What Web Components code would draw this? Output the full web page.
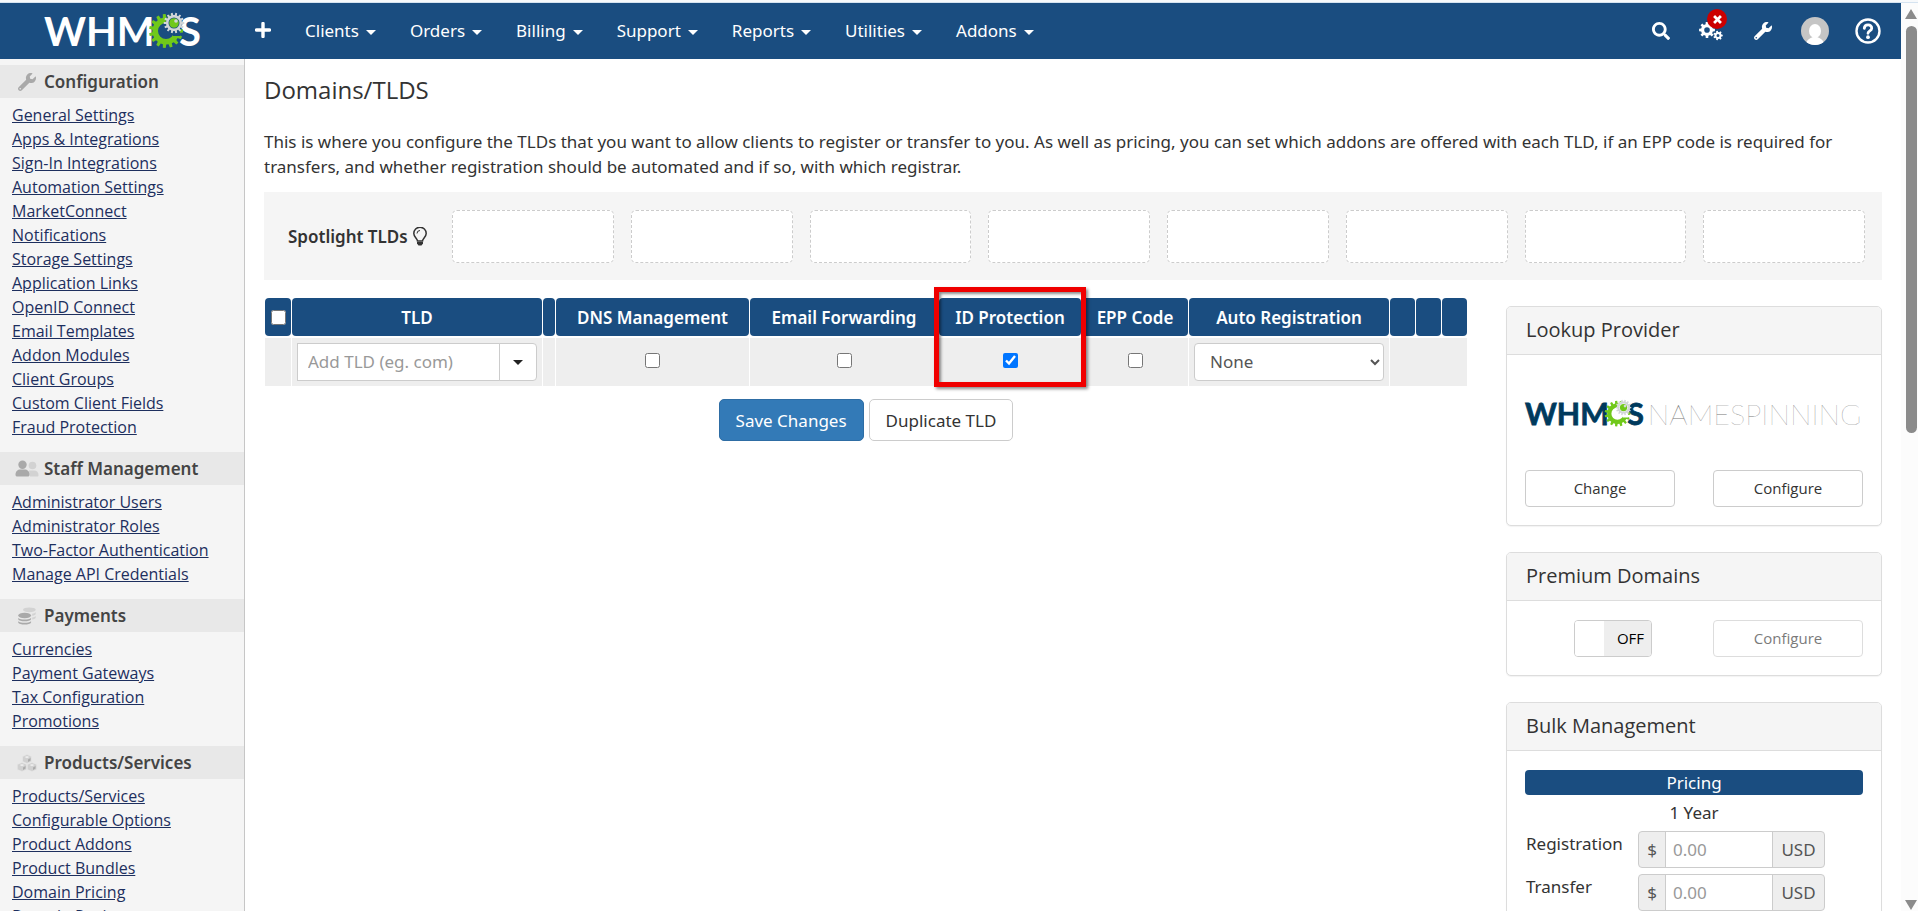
<!DOCTYPE html>
<html lang="en">
<head>
<meta charset="utf-8">
<meta name="viewport" content="width=device-width, initial-scale=1">
<title>WHMCS - Domains/TLDS</title>
<style>
  :root {
    --navy: #1a4d80;
    --line: #ccc;
    --ink: #333;
    --body-font: "Noto Sans", "Open Sans", sans-serif;
    --ui-font: "Open Sans", "Noto Sans", sans-serif;
  }
  body { margin: 0; background: #fff; color: var(--ink); font: 17px/25px var(--body-font); overflow: hidden; }
</style>
</head>
<body>
<admin-app>
  <top-bar slot="header"></top-bar>
  <side-nav slot="nav">
    <side-section icon="wrench" heading="Configuration"
      items="General Settings|Apps &amp; Integrations|Sign-In Integrations|Automation Settings|MarketConnect|Notifications|Storage Settings|Application Links|OpenID Connect|Email Templates|Addon Modules|Client Groups|Custom Client Fields|Fraud Protection"></side-section>
    <side-section icon="users" heading="Staff Management"
      items="Administrator Users|Administrator Roles|Two-Factor Authentication|Manage API Credentials"></side-section>
    <side-section icon="coins" heading="Payments"
      items="Currencies|Payment Gateways|Tax Configuration|Promotions"></side-section>
    <side-section icon="cubes" heading="Products/Services"
      items="Products/Services|Configurable Options|Product Addons|Product Bundles|Domain Pricing|Domain Registrars"></side-section>
  </side-nav>
  <domain-page>
    <spotlight-bar slot="spotlight" slots="8"></spotlight-bar>
    <tld-table slot="table"></tld-table>
    <side-panel slot="aside" heading="Lookup Provider">
      <lookup-provider></lookup-provider>
    </side-panel>
    <side-panel slot="aside" heading="Premium Domains">
      <premium-domains></premium-domains>
    </side-panel>
    <side-panel slot="aside" heading="Bulk Management">
      <bulk-pricing></bulk-pricing>
    </side-panel>
  </domain-page>
  <scroll-rail slot="rail"></scroll-rail>
</admin-app>

<script>
/* Outline of a cog with square teeth, centred on (cx, cy). */
function cog(cx, cy, outer, inner, teeth) {
  const pts = [];
  const step = Math.PI * 2 / teeth;
  for (let i = 0; i < teeth; i++) {
    const a = i * step;
    for (const [r, k] of [[inner, -0.3], [outer, -0.2], [outer, 0.2], [inner, 0.3]]) {
      pts.push((cx + r * Math.cos(a + k * step)).toFixed(2) + ' ' + (cy + r * Math.sin(a + k * step)).toFixed(2));
    }
  }
  return 'M' + pts.join('L') + 'Z';
}
function hole(cx, cy, r) {
  return `M${cx - r} ${cy}a${r} ${r} 0 1 0 ${2 * r} 0a${r} ${r} 0 1 0 ${-2 * r} 0Z`;
}

const WRENCH = 'M507.73 109.1c-2.24-9.03-13.54-12.09-20.12-5.51l-74.36 74.36-67.88-11.31-11.31-67.88 74.36-74.36c6.62-6.62 3.43-17.9-5.66-20.16-47.38-11.74-99.55.91-136.58 37.93-39.64 39.64-50.55 97.1-34.05 147.2L18.74 402.76c-24.99 24.99-24.99 65.51 0 90.5 24.99 24.99 65.51 24.99 90.5 0l213.21-213.21c50.12 16.71 107.47 5.68 147.37-34.22 37.07-37.07 49.7-89.32 37.91-136.73zM64 472c-13.25 0-24-10.75-24-24 0-13.26 10.75-24 24-24s24 10.74 24 24c0 13.25-10.75 24-24 24z';

const ICONS = {
  plus: ['0 0 16 16', '<path d="M8 1.500v13M1.500 8h13" stroke="currentColor" stroke-width="3.400" stroke-linecap="round"/>'],
  search: ['0 0 512 512', '<path d="M505 442.700L405.300 343c-4.500-4.500-10.600-7-17-7H372c27.600-35.300 44-79.700 44-128C416 93.100 322.900 0 208 0S0 93.100 0 208s93.100 208 208 208c48.300 0 92.700-16.400 128-44v16.300c0 6.400 2.500 12.500 7 17l99.700 99.700c9.400 9.400 24.600 9.400 33.900 0l28.300-28.300c9.400-9.400 9.400-24.600.1-34zM208 336c-70.700 0-128-57.200-128-128 0-70.700 57.200-128 128-128 70.700 0 128 57.200 128 128 0 70.700-57.200 128-128 128z" fill="currentColor"/>'],
  wrench: ['0 0 512 512', `<path d="${WRENCH}" fill="currentColor"/>`],
  cogs: ['0 0 24 20', `<path fill="currentColor" fill-rule="evenodd" d="${cog(8, 9, 8, 6, 8)}${hole(8, 9, 2.8)}${cog(19, 14.5, 4.8, 3.6, 7)}${hole(19, 14.5, 1.5)}"/>`],
  avatar: ['0 0 28 28', '<clipPath id="c"><circle cx="14" cy="14" r="14"/></clipPath><g clip-path="url(#c)"><path fill="#c5c5c5" d="M0 0h28v28H0z"/><ellipse cx="14" cy="14" rx="6" ry="7" fill="#fff"/><path fill="#fff" d="M5 28c0-5 4-7 7-8h4c3 1 7 3 7 8z"/></g>'],
  help: ['0 0 26 26', '<circle cx="13" cy="13" r="11.500" fill="none" stroke="currentColor" stroke-width="2.400"/><path d="M9.300 10.400C9.500 5.700 17 6 16.700 10.300c-.2 2.700-3.700 2.500-3.700 5" fill="none" stroke="currentColor" stroke-width="2.800" stroke-linecap="round"/><circle cx="13" cy="19.200" r="1.900" fill="currentColor"/>'],
  bulb: ['0 0 14 19', '<path d="M4.500 14c0-2.500-3.700-4-3.700-7.600a6.200 6.200 0 0 1 12.400 0C13.200 10 9.500 11.500 9.500 14z" fill="none" stroke="currentColor" stroke-width="1.500"/><path d="M4 6.500a3 3 0 0 1 3-3" fill="none" stroke="currentColor"/><path d="M4 15h6v1.500L8.500 18.500h-3L4 16.500z" fill="currentColor"/>'],
  users: ['0 0 24 17', '<g fill="#d2d2d2"><circle cx="17.500" cy="5" r="3.800"/><path d="M14 10h5c3 0 4.500 2 4.500 4.500 0 1-.4 1.500-1.500 1.500h-7z"/></g><g fill="#a9a9a9"><circle cx="7.500" cy="4.200" r="4.200"/><path d="M.5 14c0-3 2-5 5-5h4c3 0 5 2 5 5 0 1.500-.5 2-2 2h-10c-1.500 0-2-.5-2-2z"/></g>'],
  coins: ['0 0 20 19', '<g fill="#d2d2d2"><ellipse cx="12.500" cy="3" rx="6.700" ry="2.600"/><path d="M15.500 7c1.700-.2 3-.7 3.700-1.500V7c0 1-1.500 1.800-3.700 2.200zM15.500 11c1.700-.2 3-.7 3.700-1.500V11c0 1-1.500 1.800-3.700 2.200z"/></g><g fill="#a9a9a9"><ellipse cx="7.500" cy="9" rx="6.800" ry="3"/><path d="M.7 11.500c2.500 2.200 11 2.200 13.600 0v1.300c-1 3-12.600 3-13.600 0zM.7 15c2.500 2.200 11 2.200 13.600 0v1.300c-1 3-12.600 3-13.600 0z"/></g>'],
  cubes: ['0 0 20 18', '<g fill="#d0d0d0" stroke="#e8e8e8" stroke-width=".6"><path d="M10 .5l4.500 2v5L10 9.500l-4.500-2v-5z"/><path d="M5 8.500l4.700 2v5L5 17.500l-4.700-2v-5z"/><path d="M15 8.500l4.700 2v5L15 17.500l-4.700-2v-5z"/></g><g fill="#acacac"><path d="M11 5.500l2.500-1.500v2.500L11 8zM6 13.500L8.500 12v2.500L6 16zM16 13.500l2.500-1.500v2.500L16 16z"/></g><g fill="#ececec"><path d="M10 2l2.500 1-2.500 1.200L7.500 3zM5 10l2.500 1L5 12.200 2.500 11zM15 10l2.500 1-2.500 1.200-2.500-1.200z"/></g>']
};

class Base extends HTMLElement {
  connectedCallback() {
    if (this.shadowRoot) return;
    this.attachShadow({ mode: 'open' }).innerHTML = this.render();
  }
}
const define = (name, render) => customElements.define(name, class extends Base {
  render() { return render(this); }
});

define('ui-icon', el => {
  const [box, art] = ICONS[el.getAttribute('name')];
  return `<style>:host{display:block;flex:none}svg{display:block;width:100%;height:100%}</style>
  <svg viewBox="${box}" aria-hidden="true">${art}</svg>`;
});

/* WHMCS word mark: --mark colours the letters, --under is the surface below. */
define('brand-logo', el => {
  const tail = el.hasAttribute('product');
  return `<style>
    :host{display:block}
    svg{display:block;width:100%;height:auto;overflow:visible}
    text{font-family:Lato,sans-serif}
    .w{font-size:40px;font-weight:700;fill:var(--mark)}
    .bold{stroke:var(--mark);stroke-width:1}
    .p{font-size:38px;font-weight:100;fill:#777}
  </style>
  <svg viewBox="0 0 ${tail ? 446 : 158} 36" role="img">
    <text class="w${tail ? ' bold' : ''}" x="0" y="33">WHM</text>
    <text class="w${tail ? ' bold' : ''}" x="135" y="33">S</text>
    <path fill="#70c81a" fill-rule="evenodd" d="${cog(122, 18, 17, 13.6, 15)}${hole(122, 18, 8)}"/>
    <path fill="var(--under)" d="M125 15l11-4v12h-7z"/>
    <circle cx="130" cy="10" r="8.500" fill="var(--under)"/>
    <path fill="#d2d6d8" fill-rule="evenodd" d="${cog(130, 10, 10.3, 8, 14)}${hole(130, 10, 5.5)}"/>
    <circle cx="130" cy="10" r="4.800" fill="#70c81a"/>
    <circle cx="132" cy="8" r="1.800" fill="#d2d6d8"/>
    ${tail ? '<text class="p" x="162" y="33">NAMESPINNING</text>' : ''}
  </svg>`;
});

define('admin-app', () => `<style>
    :host{display:grid;grid-template:auto auto minmax(0,1fr) / auto minmax(0,1fr) 17px;height:100vh}
    .strip{grid-column:1/-1;height:2px;background:#f7f9fb;border-bottom:1px solid #d5e3f0}
    ::slotted([slot=header]){grid-column:1/3;grid-row:2}
    ::slotted([slot=nav]){grid-column:1;grid-row:3;overflow:hidden}
    ::slotted([slot=rail]){grid-column:3;grid-row:2/4}
    main{grid-column:2;grid-row:3;overflow:hidden}
  </style>
  <div class="strip"></div><slot name="header"></slot><slot name="nav"></slot>
  <main><slot></slot></main><slot name="rail"></slot>`);

define('scroll-rail', () => `<style>
    :host{display:flex;flex-direction:column;align-items:center;background:#fcfcfc;padding:6px 0 1px 3px}
    .up,.down{border:6px solid transparent;border-top:0;border-bottom:10px solid #8b8b8b}
    .down{border-top:10px solid #8b8b8b;border-bottom:0}
    .track{flex:1;width:11px;margin:7px 0}
    .thumb{height:47%;background:#8b8b8b;border-radius:6px}
  </style><div class="up"></div><div class="track"><div class="thumb"></div></div><div class="down"></div>`);

define('top-bar', () => `<style>
    :host{display:flex;align-items:center;height:56px;background:var(--navy);color:#fff}
    brand-logo{width:158px;margin-left:44px;--mark:#fff;--under:var(--navy)}
    nav{display:flex;align-items:center;margin-left:53px;gap:34px;padding-bottom:2px}
    .tools{display:flex;align-items:center;margin-left:auto;margin-right:20px}
    button{all:unset;cursor:pointer;display:block;position:relative}
    a{color:inherit;text-decoration:none;display:flex;align-items:center;gap:7px}
    a::after{content:"";border:5px solid transparent;border-top-color:#fff;border-bottom:0;margin-top:5px}
    .s16{width:16px;height:16px}.s18{width:18px;height:18px}
    .gears{width:24px;height:20px}.s28{width:28px;height:28px}.s26{width:26px;height:26px}
    .badge{position:absolute;left:8px;top:-12px;width:20px;height:20px;border-radius:50%;background:#c00;display:grid;place-items:center}
    .badge svg{width:11px;height:11px}
    .search{margin-right:29px}.system{margin-right:31px}.config{margin-right:29px}.account{margin-right:26px}
  </style>
  <brand-logo></brand-logo>
  <nav>
    <button aria-label="Add"><ui-icon class="s16" name="plus"></ui-icon></button>
    ${['Clients', 'Orders', 'Billing', 'Support', 'Reports', 'Utilities', 'Addons'].map(t => `<a href="#">${t}</a>`).join('')}
  </nav>
  <div class="tools">
    <button aria-label="Search" class="search"><ui-icon class="s18" name="search"></ui-icon></button>
    <button aria-label="System" class="system"><ui-icon class="gears" name="cogs"></ui-icon>
      <span class="badge"><svg viewBox="0 0 8 8"><path d="M1.500 1.500l5 5M6.500 1.500l-5 5" stroke="#fff" stroke-width="2"/></svg></span></button>
    <button aria-label="Configuration" class="config"><ui-icon class="s18" name="wrench"></ui-icon></button>
    <button aria-label="Account" class="account"><ui-icon class="s28" name="avatar"></ui-icon></button>
    <button aria-label="Help"><ui-icon class="s26" name="help"></ui-icon></button>
  </div>`);

define('side-nav', () => `<style>
    :host{display:block;width:244px;box-sizing:content-box;padding-top:6px;background:#f5f5f5;border-right:1px solid #c6c6c6}
  </style><slot></slot>`);

define('side-section', el => `<style>
    :host{display:block;padding-bottom:13px}
    h2{display:flex;align-items:center;height:33px;margin:0 0 5px;padding-left:15px;background:#e8e8e8;color:#444;font-size:17px;font-weight:600}
    ui-icon{width:24px;height:18px;margin-right:5px;color:#a9a9a9}
    ul{list-style:none;margin:0;padding:0 0 0 12px}
    li{font:16px/24px var(--ui-font);white-space:nowrap}
    a{color:#1d2f5e}
  </style>
  <h2><ui-icon name="${el.getAttribute('icon')}"></ui-icon>${el.getAttribute('heading')}</h2>
  <ul>${el.getAttribute('items').split('|').map(t => `<li><a href="#">${t.replace('&', '&amp;')}</a></li>`).join('')}</ul>`);

define('domain-page', () => `<style>
    :host{display:block;padding:15px 19px 0}
    h1{font:400 24px/32px var(--ui-font);margin:0 0 23px}
    p{margin:0 0 13px}
    .cols{display:grid;grid-template-columns:minmax(0,1fr) 376px;column-gap:38px;margin-top:16px;align-items:start}
    aside{display:flex;flex-direction:column;gap:26px;padding-top:10px}
  </style>
  <h1>Domains/TLDS</h1>
  <p>This is where you configure the TLDs that you want to allow clients to register or transfer to you. As well as pricing, you can set which addons are offered with each TLD, if an EPP code is required for transfers, and whether registration should be automated and if so, with which registrar.</p>
  <slot name="spotlight"></slot>
  <div class="cols"><slot name="table"></slot><aside><slot name="aside"></slot></aside></div>`);

define('spotlight-bar', el => `<style>
    :host{display:flex;gap:17px;background:#f5f5f5;padding:18px 17px 17px 24px}
    .label{display:flex;align-items:center;gap:5px;width:147px;font-weight:600;white-space:nowrap}
    ui-icon{width:14px;height:19px}
    .slot{flex:1;height:51px;border:1px dashed #ccc;border-radius:5px;background:#fff}
  </style>
  <div class="label">Spotlight TLDs<ui-icon name="bulb"></ui-icon></div>
  ${'<div class="slot"></div>'.repeat(+el.getAttribute('slots'))}`);

define('tld-table', () => {
  const cols = [26, 250, 12, 193, 188, 142, 106, 200, 25, 25, 25];
  const box = (label, on) => `<td class="tick"><input type="checkbox" aria-label="${label}"${on ? ' checked' : ''}></td>`;
  return `<style>
    :host{display:block}
    *{box-sizing:border-box}
    table{width:100%;table-layout:fixed;border-collapse:separate;border-spacing:1px 2px}
    th{height:38px;padding:0;background:var(--navy);color:#fff;font-weight:600;border-radius:4px;position:relative;white-space:nowrap}
    td{height:48px;padding:0 5px;background:#eee;text-align:center}
    .tick{padding-bottom:3px}
    input[type=checkbox]{width:15px;height:15px;display:block;margin:0 auto}
    .mark{position:absolute;z-index:1;left:-5px;right:-5px;top:-11px;height:100px;border:5px solid #f00000;
      box-shadow:2px 2px 3px rgba(0,0,0,.45),inset 2px 2px 3px rgba(0,0,0,.45);pointer-events:none}
    .add{display:flex}
    .add input{flex:1;min-width:0;height:38px;border:1px solid var(--line);padding:0 10px 2px;font:inherit;color:#555;background:#fff}
    .add input::placeholder{color:#999;opacity:1}
    .add button{width:38px;height:38px;margin-left:-1px;border:1px solid var(--line);border-radius:0 4px 4px 0;background:#fff;padding:0;display:grid;place-items:center}
    .add button::before{content:"";border:5px solid transparent;border-top-color:#222;border-bottom:0}
    select{display:block;width:100%;height:38px;border:1px solid var(--line);border-radius:4px;background:#fff;color:#555;font:inherit;padding:0 0 2px 11px}
    .actions{display:flex;justify-content:center;gap:5px;margin-top:11px}
    .actions button{height:42px;padding:0 16px;border:1px solid var(--line);border-radius:5px;background:#fff;color:#333;font:inherit}
    .actions .save{background:#337ab7;border-color:#2e6da4;color:#fff}
  </style>
  <table>
    <colgroup>${cols.map(w => `<col style="width:${w}px">`).join('')}</colgroup>
    <thead><tr>
      <th><input type="checkbox" aria-label="Select all"></th><th>TLD</th><th></th><th>DNS Management</th><th>Email Forwarding</th>
      <th>ID Protection<div class="mark"></div></th><th>EPP Code</th><th>Auto Registration</th><th></th><th></th><th></th>
    </tr></thead>
    <tbody><tr>
      <td></td>
      <td><div class="add"><input type="text" placeholder="Add TLD (eg. com)" aria-label="Add TLD"><button aria-label="Choose TLD"></button></div></td>
      <td></td>${box('DNS Management')}${box('Email Forwarding')}${box('ID Protection', true)}${box('EPP Code')}
      <td><select aria-label="Auto Registration"><option>None</option></select></td>
      <td colspan="3"></td>
    </tr></tbody>
  </table>
  <div class="actions"><button class="save">Save Changes</button><button>Duplicate TLD</button></div>`;
});

define('side-panel', el => `<style>
    :host{display:block;border:1px solid #ddd;border-radius:5px;background:#fff;box-shadow:0 1px 1px rgba(0,0,0,.05)}
    h3{margin:0;padding:0 19px 2px;font:400 20px/45px var(--ui-font);background:#f5f5f5;border-bottom:1px solid #ddd;border-radius:4px 4px 0 0}
    .body{padding:19px 18px 18px}
  </style><h3>${el.getAttribute('heading')}</h3><div class="body"><slot></slot></div>`);

const BUTTON = `button{box-sizing:border-box;height:37px;border:1px solid var(--line);border-radius:4px;background:#fff;color:#333;font:15px/20px var(--ui-font);padding:0 0 2px}
  .pair{display:grid;grid-template-columns:1fr 1fr;column-gap:38px}`;

define('lookup-provider', () => `<style>${BUTTON}
    :host{display:block}
    .logo{display:grid;align-items:center;height:80px;margin-bottom:16px}
    brand-logo{--mark:#003a5d;--under:#fff}
  </style>
  <div class="logo"><brand-logo product></brand-logo></div>
  <div class="pair"><button>Change</button><button>Configure</button></div>`);

define('premium-domains', () => `<style>${BUTTON}
    :host{display:block}
    button:disabled{opacity:.65}
    .switch{justify-self:end;margin-right:23px;display:flex;box-sizing:border-box;width:78px;height:37px;border:1px solid var(--line);border-radius:4px;overflow:hidden;position:relative;font:15px/35px var(--ui-font);color:#000}
    .switch input{position:absolute;inset:0;margin:0;opacity:0}
    .knob{width:29px;background:#fff}
    .off{flex:1;background:#eee;text-align:center;padding-left:6px}
  </style>
  <div class="pair">
    <label class="switch"><input type="checkbox" role="switch" aria-label="Premium Domains"><span class="knob"></span><span class="off">OFF</span></label>
    <button disabled>Configure</button>
  </div>`);

define('bulk-pricing', () => `<style>
    :host{display:block}
    .bar{background:var(--navy);color:#fff;text-align:center;border-radius:4px}
    .term{text-align:center;margin:5px 0 6px}
    .row{display:grid;grid-template-columns:113px 187px;margin-bottom:6px}
    .group{display:flex;height:37px;box-sizing:border-box;border:1px solid var(--line);border-radius:4px;background:#eee;color:#555;line-height:35px;overflow:hidden}
    .cur{width:26px;text-align:center}.code{width:51px;text-align:center}
    input{flex:1;min-width:0;border:solid var(--line);border-width:0 1px;padding:0 7px;font:inherit;color:#555;background:#fff}
    input::placeholder{color:#999;opacity:1}
    label{padding-left:1px}
  </style>
  <div class="bar">Pricing</div><div class="term">1 Year</div>
  ${['Registration', 'Transfer'].map(t => `<div class="row"><label for="${t}">${t}</label>
    <div class="group"><span class="cur">$</span><input id="${t}" type="text" placeholder="0.00"><span class="code">USD</span></div></div>`).join('')}`);
</script>
</body>
</html>
